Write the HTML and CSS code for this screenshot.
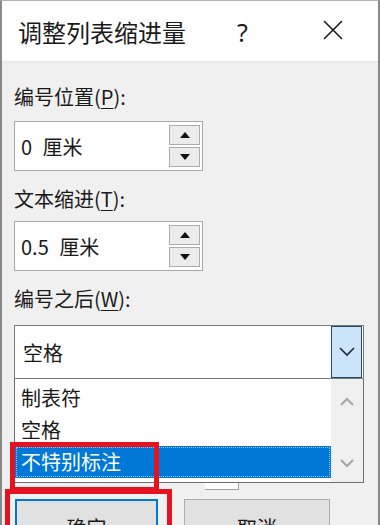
FILE: index.html
```html
<!DOCTYPE html>
<html lang="zh-CN">
<head>
    <meta charset="UTF-8">
    <meta name="viewport" content="width=device-width, initial-scale=1.0">
    <title>调整列表缩进量</title>
    <link rel="stylesheet" href="styles.css">
</head>
<body>
    <div class="window">
        <div class="titlebar">
            <span class="title">调整列表缩进量</span>
            <span class="help">?</span>
            <span class="close">
                <svg width="22" height="22" viewBox="0 0 22 22"><path d="M2 2 L20 20 M20 2 L2 20" stroke="#1a1a1a" stroke-width="1.6" fill="none"/></svg>
            </span>
        </div>
        <div class="content">
            <div class="label first">编号位置(<u>P</u>):</div>
            <div class="spin">
                <span class="spin-value">0 厘米</span>
                <div class="spin-btns">
                    <span class="spin-btn"><svg width="10" height="6" viewBox="0 0 10 6"><path d="M5 0 L10 6 L0 6 Z" fill="#111"/></svg></span>
                    <span class="spin-btn"><svg width="10" height="6" viewBox="0 0 10 6"><path d="M0 0 L10 0 L5 6 Z" fill="#111"/></svg></span>
                </div>
            </div>
            <div class="label">文本缩进(<u>T</u>):</div>
            <div class="spin">
                <span class="spin-value">0.5 厘米</span>
                <div class="spin-btns">
                    <span class="spin-btn"><svg width="10" height="6" viewBox="0 0 10 6"><path d="M5 0 L10 6 L0 6 Z" fill="#111"/></svg></span>
                    <span class="spin-btn"><svg width="10" height="6" viewBox="0 0 10 6"><path d="M0 0 L10 0 L5 6 Z" fill="#111"/></svg></span>
                </div>
            </div>
            <div class="label">编号之后(<u>W</u>):</div>
            <div class="combo">
                <span class="combo-value">空格</span>
                <span class="combo-btn">
                    <svg width="16" height="10" viewBox="0 0 16 10"><path d="M1 1 L8 8 L15 1" stroke="#1c2a3a" stroke-width="1.6" fill="none"/></svg>
                </span>
            </div>
            <div class="listbox">
                <div class="items">
                    <div class="item">制表符</div>
                    <div class="item">空格</div>
                    <div class="item selected">不特别标注</div>
                </div>
                <div class="scrollbar">
                    <svg width="14" height="9" viewBox="0 0 14 9"><path d="M1 8 L7 2 L13 8" stroke="#a6a6a6" stroke-width="2" fill="none"/></svg>
                    <svg width="14" height="9" viewBox="0 0 14 9"><path d="M1 1 L7 7 L13 1" stroke="#a6a6a6" stroke-width="2" fill="none"/></svg>
                </div>
            </div>
            <div class="buttons">
                <button class="btn default">确定</button>
                <button class="btn">取消</button>
            </div>
        </div>
        <div class="peek"></div>
        <div class="mark mark-item"></div>
        <div class="mark mark-ok"></div>
    </div>
</body>
</html>
```

FILE: styles.css
```css
body {
    margin: 0;
    font-family: "Noto Sans CJK SC", "Noto Sans", sans-serif;
    color: #1a1a1a;
    background: #f0f0f0;
}
.window {
    position: relative;
    width: 380px;
    height: 525px;
    box-sizing: border-box;
    border: 2px solid #8a8a8a;
    border-top: 1px solid #b4b4b4;
    border-bottom: none;
    background: #f0f0f0;
    overflow: hidden;
}
.titlebar {
    display: flex;
    align-items: center;
    height: 61px;
    background: #fff;
    padding-left: 16px;
    border-bottom: 1px solid #e6e6e6;
    box-sizing: border-box;
}
.title {
    font-size: 24px;
    width: 168px;
    line-height: 28px;
    padding-top: 2px;
}
.help {
    font-family: "Noto Sans", sans-serif;
    font-size: 25px;
    margin-left: 51px;
    width: 14px;
    line-height: 28px;
    padding-top: 2px;
}
.close {
    display: flex;
    margin-left: 71px;
    margin-top: -2px;
}
.content {
    padding: 0 0 0 12px;
}
.label {
    font-size: 20px;
    line-height: 28px;
    margin-top: 14px;
    margin-bottom: 8px;
}
.label.first {
    margin-top: 21px;
    margin-bottom: 10px;
}
.label u {
    text-decoration-thickness: 1px;
    text-underline-offset: 3px;
}
.spin {
    display: flex;
    align-items: center;
    justify-content: space-between;
    width: 189px;
    height: 50px;
    box-sizing: border-box;
    border: 1px solid #a9a9a9;
    background: #fff;
    padding: 0 2px 0 6px;
}
.spin-value {
    font-size: 20px;
    word-spacing: 6px;
}
.spin-btns {
    display: flex;
    flex-direction: column;
    gap: 2px;
}
.spin-btn {
    display: flex;
    align-items: center;
    justify-content: center;
    width: 31px;
    height: 20px;
    box-sizing: border-box;
    border: 1px solid #adadad;
    background: #ececec;
}
.combo {
    display: flex;
    align-items: center;
    justify-content: space-between;
    width: 350px;
    height: 54px;
    box-sizing: border-box;
    border: 1px solid #7a7a7a;
    background: #fff;
    padding: 0 1px 0 8px;
    margin-top: 12px;
}
.combo-value {
    font-size: 20px;
}
.combo-btn {
    display: flex;
    align-items: center;
    justify-content: center;
    width: 31px;
    height: 52px;
    box-sizing: border-box;
    border: 1px solid #264a72;
    background: #cce4f7;
}
.listbox {
    display: flex;
    width: 350px;
    height: 104px;
    box-sizing: border-box;
    border: 1px solid #6e6e6e;
    border-top: none;
    background: #fff;
}
.items {
    flex: 1;
    padding-top: 3px;
}
.item {
    font-size: 20px;
    line-height: 32px;
    height: 32px;
    padding-left: 6px;
}
.item.selected {
    background: #0078d7;
    color: #fff;
    outline: 1px dotted #9cc8ee;
    outline-offset: -2px;
}
.scrollbar {
    display: flex;
    flex-direction: column;
    align-items: center;
    justify-content: space-between;
    width: 32px;
    background: #f0f0f0;
    padding: 18px 0 14px;
    box-sizing: border-box;
}
.buttons {
    display: flex;
    gap: 26px;
    margin-top: 16px;
    padding-left: 1px;
}
.btn {
    width: 143px;
    height: 54px;
    box-sizing: border-box;
    border: 1px solid #adadad;
    background: #e1e1e1;
    font-family: "Noto Sans CJK SC", sans-serif;
    font-size: 20px;
    color: #1a1a1a;
    padding-top: 4px;
}
.btn.default {
    border: 2px solid #0078d7;
}
.btn + .btn {
    width: 146px;
}
.peek {
    position: absolute;
    left: 203px;
    top: 482px;
    width: 33px;
    height: 6px;
    background: #fff;
    border-right: 1px solid #a0a0a0;
    border-bottom: 1px solid #a0a0a0;
}
.mark {
    position: absolute;
    border: 5px solid #e5121f;
    box-sizing: border-box;
}
.mark-item {
    left: 8px;
    top: 441px;
    width: 149px;
    height: 50px;
}
.mark-ok {
    left: 3px;
    top: 488px;
    width: 167px;
    height: 60px;
}
```
